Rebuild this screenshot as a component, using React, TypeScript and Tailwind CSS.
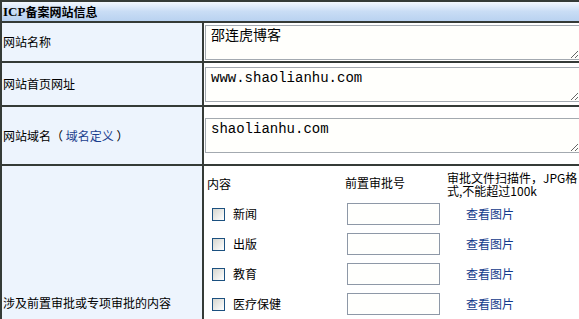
const cjk = { fontFamily: '"Noto Sans CJK SC", "Noto Sans", sans-serif' };
const mono = { fontFamily: '"Liberation Mono", "Noto Sans CJK SC", monospace' };

const categories = ["新闻", "出版", "教育", "医疗保健", "药品和医疗器械", "文化", "广播电影电视", "电子公告"];

function Label({ children }: { children: React.ReactNode }) {
  return (
    <div className="flex items-center bg-[#edf4fd] pl-[1px] text-[12px] leading-[14px] text-black">
      {children}
    </div>
  );
}

function Field({ value, className = "" }: { value: string; className?: string }) {
  return (
    <div className={`flex items-center bg-white ${className}`}>
      <textarea
        defaultValue={value}
        style={mono}
        className="ml-[1px] h-[35px] w-[375px] border border-[#a3a9b0] bg-[#fffffc] px-[5px] pt-[1px] text-[14px] leading-[18px] text-black outline-none"
      />
    </div>
  );
}

function CheckBox() {
  return (
    <span className="inline-block h-[13px] w-[13px] border border-[#1c5180] bg-gradient-to-br from-[#d6d6cf] to-white" />
  );
}

export default function App() {
  return (
    <div style={cjk} className="h-[319px] w-[579px] overflow-hidden bg-white">
      <div className="grid w-[600px] grid-cols-[200px_396px] gap-[2px] bg-[#353b37] pl-[2px] pt-[2px]">
        {/* header */}
        <div className="col-span-2 flex h-[19px] items-center bg-gradient-to-b from-[#f3f8fe] via-[#c9ddf5] to-[#b9d2f0] pl-[1px] text-[12px] font-bold text-black">
          <span style={{ fontFamily: '"Liberation Serif", serif' }} className="text-[13px]">ICP</span>
          <span>备案网站信息</span>
        </div>

        <div className="contents">
          <Label>网站名称</Label>
          <Field value="邵连虎博客" className="h-[38px]" />
        </div>

        <div className="contents">
          <Label>网站首页网址</Label>
          <Field value="www.shaolianhu.com" className="h-[42px]" />
        </div>

        <div className="contents">
          <Label>
            网站域名（&nbsp;
            <a href="#" className="text-[#1b3e8e]">域名定义</a>
            &nbsp;）
          </Label>
          <Field value="shaolianhu.com" className="h-[57px]" />
        </div>

        <div className="contents">
          <Label>涉及前置审批或专项审批的内容</Label>
          <div className="bg-white pl-[3px] text-[12px] leading-[14px] text-black">
            <div className="grid grid-cols-[138px_102px_133px]">
              <div className="flex h-[33px] items-center pt-[2px]">内容</div>
              <div className="flex h-[33px] items-center">前置审批号</div>
              <div className="flex h-[33px] items-center pt-[3px]">
                <p className="leading-[13px]">
                  审批文件扫描件，JPG格
                  <br />
                  式,不能超过100k
                </p>
              </div>
              {categories.map((c) => (
                <div key={c} className="contents">
                  <div className="flex h-[30px] items-center gap-[8px] pl-[5px]">
                    <CheckBox />
                    <span>{c}</span>
                  </div>
                  <div className="flex h-[30px] items-center pl-[2px]">
                    <span className="inline-block h-[22px] w-[93px] border border-[#8e98a7] bg-[#fffffd]" />
                  </div>
                  <div className="flex h-[30px] items-center pl-[19px]">
                    <a href="#" className="text-[#123a8c]">查看图片</a>
                  </div>
                </div>
              ))}
            </div>
          </div>
        </div>
      </div>
    </div>
  );
}
